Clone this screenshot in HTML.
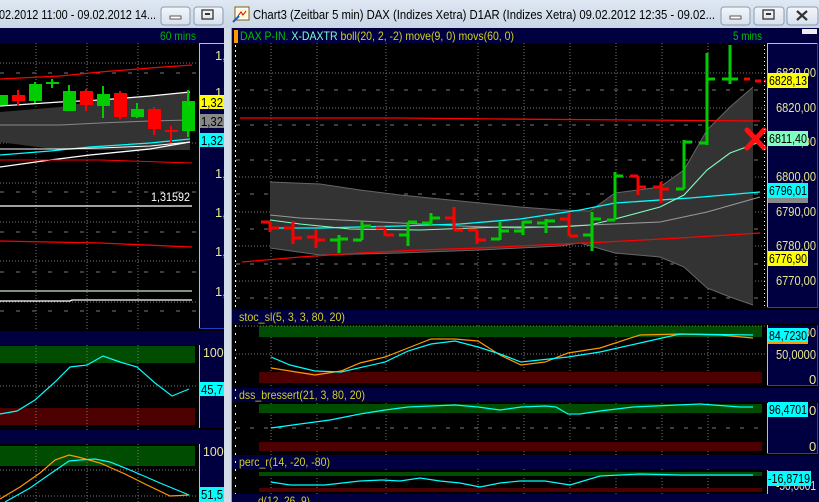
<!DOCTYPE html>
<html><head><meta charset="utf-8"><style>
html,body{margin:0;padding:0;background:#000;overflow:hidden}
svg{display:block}
text{font-family:"Liberation Sans",sans-serif}
</style></head><body>
<svg width="819" height="502" viewBox="0 0 819 502" xmlns="http://www.w3.org/2000/svg">
<defs>
<linearGradient id="tb" x1="0" y1="0" x2="0" y2="1"><stop offset="0" stop-color="#dfe8f3"/><stop offset="1" stop-color="#c9d6e6"/></linearGradient>
<linearGradient id="bt" x1="0" y1="0" x2="0" y2="1"><stop offset="0" stop-color="#f4f7fb"/><stop offset="1" stop-color="#d6e0ec"/></linearGradient>
</defs>
<rect width="819" height="502" fill="#000"/>

<!-- ================= LEFT WINDOW ================= -->
<rect x="0" y="0" width="224" height="28" fill="url(#tb)"/>
<text x="-1" y="19" font-size="13" fill="#000" textLength="157" lengthAdjust="spacingAndGlyphs">02.2012 11:00 - 09.02.2012 14...</text>
<rect x="161" y="7" width="29" height="18" rx="3" fill="url(#bt)" stroke="#8a9bb0"/>
<rect x="170" y="16" width="11" height="3" fill="#fff" stroke="#333" stroke-width="0.8"/>
<rect x="194" y="7" width="29" height="18" rx="3" fill="url(#bt)" stroke="#8a9bb0"/>
<rect x="202" y="10" width="11" height="9" fill="none" stroke="#333" stroke-width="1.3"/>
<rect x="205" y="13" width="5" height="2" fill="#333"/>
<rect x="0" y="28" width="224" height="15" fill="#000040"/>
<text x="160" y="40" font-size="12" fill="#00b000" textLength="36" lengthAdjust="spacingAndGlyphs">60 mins</text>

<g stroke="#777" stroke-dasharray="1,2" stroke-width="1">
<line x1="36" y1="43" x2="36" y2="329"/><line x1="87" y1="43" x2="87" y2="329"/><line x1="138" y1="43" x2="138" y2="329"/>
<line x1="0" y1="63" x2="196" y2="63"/><line x1="0" y1="143" x2="196" y2="143"/><line x1="0" y1="183" x2="196" y2="183"/><line x1="0" y1="222" x2="196" y2="222"/><line x1="0" y1="261" x2="196" y2="261"/><line x1="0" y1="302" x2="196" y2="302"/>
</g>
<g stroke="#777" stroke-dasharray="4,12" stroke-width="1">
<line x1="0" y1="73" x2="196" y2="73"/><line x1="0" y1="192" x2="196" y2="192"/><line x1="0" y1="232" x2="196" y2="232"/><line x1="0" y1="272" x2="196" y2="272"/><line x1="0" y1="311" x2="196" y2="311"/>
</g>
<polygon points="0,112 60,107 100,100 150,96 190,92 190,150 150,150 100,150 60,150 0,142" fill="#333"/>
<polyline points="0,106 60,102 100,100 150,96 190,92" fill="none" stroke="#fff" stroke-width="1.3"/>
<polyline points="0,125 60,125 100,123 150,121 190,120" fill="none" stroke="#888" stroke-width="1"/>
<polyline points="0,79 60,76 100,72 150,68 192,65" fill="none" stroke="#f00" stroke-width="1.3"/>
<polyline points="0,155 50,151 90,147 150,143 190,139" fill="none" stroke="#0ff" stroke-width="1.3"/>
<polyline points="0,149 60,149 100,148 150,146 190,142" fill="none" stroke="#fff" stroke-width="1"/>
<polyline points="0,167 50,160 90,155 150,149 190,142" fill="none" stroke="#fff" stroke-width="1.3"/>
<polyline points="0,160 100,160 192,163" fill="none" stroke="#f00" stroke-width="1"/>
<line x1="0" y1="206" x2="192" y2="206" stroke="#fff" stroke-width="1.3"/>
<polyline points="0,241 100,243 192,247" fill="none" stroke="#f00" stroke-width="1.3"/>
<line x1="0" y1="291" x2="192" y2="291" stroke="#cfe8cf" stroke-width="1.3"/>
<polyline points="0,301 70,301 72,300 192,300" fill="none" stroke="#fff" stroke-width="1.3"/>
<g>
<rect x="0" y="95" width="8" height="10" fill="#0c0"/>
<line x1="18" y1="90" x2="18" y2="106" stroke="#f00" stroke-width="2"/><rect x="12" y="95" width="13" height="6" fill="#f00"/>
<line x1="35" y1="82" x2="35" y2="103" stroke="#0c0" stroke-width="2"/><rect x="29" y="84" width="13" height="17" fill="#0c0"/>
<line x1="52" y1="79" x2="52" y2="88" stroke="#0c0" stroke-width="2"/><rect x="46" y="82" width="13" height="2" fill="#0c0"/>
<line x1="69" y1="85" x2="69" y2="111" stroke="#0c0" stroke-width="2"/><rect x="63" y="91" width="13" height="20" fill="#0c0"/>
<line x1="86" y1="89" x2="86" y2="111" stroke="#f00" stroke-width="2"/><rect x="80" y="91" width="13" height="14" fill="#f00"/>
<line x1="103" y1="86" x2="103" y2="118" stroke="#0c0" stroke-width="2"/><rect x="97" y="94" width="13" height="12" fill="#0c0"/>
<line x1="120" y1="91" x2="120" y2="119" stroke="#f00" stroke-width="2"/><rect x="114" y="93" width="13" height="24" fill="#f00"/>
<line x1="137" y1="103" x2="137" y2="118" stroke="#0c0" stroke-width="2"/><rect x="131" y="109" width="13" height="8" fill="#0c0"/>
<line x1="154" y1="107" x2="154" y2="135" stroke="#f00" stroke-width="2"/><rect x="148" y="109" width="13" height="20" fill="#f00"/>
<line x1="171" y1="126" x2="171" y2="143" stroke="#f00" stroke-width="2"/><rect x="165" y="130" width="13" height="2" fill="#f00"/>
<line x1="188" y1="90" x2="188" y2="137" stroke="#0c0" stroke-width="2"/><rect x="182" y="101" width="13" height="30" fill="#0c0"/>
</g>
<text x="151" y="201" font-size="12" fill="#fff" textLength="39" lengthAdjust="spacingAndGlyphs">1,31592</text>
<rect x="199" y="43" width="25" height="286" fill="#000040"/>
<line x1="199.5" y1="43" x2="199.5" y2="329" stroke="#e0c060"/>
<line x1="199" y1="43.5" x2="224" y2="43.5" stroke="#e0c060"/>
<line x1="199" y1="328.5" x2="224" y2="328.5" stroke="#2040c0"/>
<g font-size="13" fill="#e8e890">
<text x="215" y="60">1,</text><text x="215" y="97">1,</text><text x="215" y="178">1,</text><text x="215" y="217">1,</text><text x="215" y="256">1,</text><text x="215" y="296">1,</text>
</g>
<rect x="200" y="95" width="24" height="14" fill="#ffff00"/><text x="201" y="107" font-size="13" fill="#000" textLength="22" lengthAdjust="spacingAndGlyphs">1,32</text>
<rect x="200" y="114" width="24" height="14" fill="#888"/><text x="201" y="126" font-size="13" fill="#000" textLength="22" lengthAdjust="spacingAndGlyphs">1,32</text>
<rect x="200" y="133" width="24" height="14" fill="#0ff"/><text x="201" y="145" font-size="13" fill="#000" textLength="22" lengthAdjust="spacingAndGlyphs">1,32</text>

<rect x="0" y="331" width="224" height="14" fill="#000040"/>
<rect x="0" y="346" width="195" height="17" fill="#004c00"/>
<rect x="0" y="408" width="195" height="17" fill="#4c0000"/>
<g stroke="#777" stroke-dasharray="1,2"><line x1="36" y1="345" x2="36" y2="430"/><line x1="87" y1="345" x2="87" y2="430"/><line x1="138" y1="345" x2="138" y2="430"/><line x1="0" y1="386" x2="196" y2="386"/></g>
<polyline points="0,414 17,411 35,400 55,382 70,367 87,365 103,356 120,362 137,367 155,383 172,396 189,389" fill="none" stroke="#0ff" stroke-width="1.2"/>
<rect x="199" y="345" width="25" height="83" fill="#000040"/>
<line x1="199.5" y1="345" x2="199.5" y2="428" stroke="#e0c060"/>
<text x="203" y="357" font-size="13" fill="#e8e890" textLength="24" lengthAdjust="spacingAndGlyphs">100,</text>
<rect x="200" y="382" width="24" height="14" fill="#0ff"/><text x="201" y="394" font-size="13" fill="#000" textLength="22" lengthAdjust="spacingAndGlyphs">45,7</text>
<rect x="0" y="430" width="224" height="14" fill="#000040"/>
<rect x="0" y="446" width="195" height="20" fill="#004c00"/>
<g stroke="#777" stroke-dasharray="1,2"><line x1="36" y1="444" x2="36" y2="502"/><line x1="87" y1="444" x2="87" y2="502"/><line x1="138" y1="444" x2="138" y2="502"/><line x1="0" y1="470" x2="196" y2="470"/><line x1="0" y1="496" x2="196" y2="496"/></g>
<polyline points="0,499 20,487 40,473 55,460 69,455 78,457 100,463 125,474 145,484 170,496 189,495" fill="none" stroke="#ff9900" stroke-width="1.2"/>
<polyline points="5,502 30,488 50,474 69,461 80,460 95,459 110,462 130,470 160,483 189,495" fill="none" stroke="#0ff" stroke-width="1.2"/>
<rect x="199" y="444" width="25" height="58" fill="#000040"/>
<line x1="199.5" y1="444" x2="199.5" y2="502" stroke="#e0c060"/>
<text x="203" y="456" font-size="13" fill="#e8e890" textLength="24" lengthAdjust="spacingAndGlyphs">100,</text>
<rect x="200" y="487" width="24" height="15" fill="#0ff"/><text x="201" y="499" font-size="13" fill="#000" textLength="22" lengthAdjust="spacingAndGlyphs">51,5</text>

<rect x="224" y="0" width="8" height="502" fill="#d3dde9"/>
<line x1="231.5" y1="28" x2="231.5" y2="502" stroke="#8a9bb0"/>

<!-- ================= RIGHT WINDOW ================= -->
<rect x="224" y="0" width="595" height="28" fill="url(#tb)"/>
<rect x="235" y="7" width="14" height="13" fill="#fff" stroke="#806000"/>
<rect x="237" y="9" width="10" height="9" fill="#fff6d0"/>
<path d="M238 16 l3-4 2 3 3-4" stroke="#c00" fill="none"/>
<path d="M233 22 l6-6" stroke="#1060c0" stroke-width="2"/>
<text x="253" y="19" font-size="13" fill="#000" textLength="462" lengthAdjust="spacingAndGlyphs">Chart3 (Zeitbar 5 min)  DAX (Indizes Xetra) D1AR (Indizes Xetra) 09.02.2012 12:35 - 09.02...</text>
<rect x="721" y="7" width="29" height="18" rx="3" fill="url(#bt)" stroke="#8a9bb0"/>
<rect x="730" y="16" width="11" height="3" fill="#fff" stroke="#333" stroke-width="0.8"/>
<rect x="754" y="7" width="30" height="18" rx="3" fill="url(#bt)" stroke="#8a9bb0"/>
<rect x="763" y="10" width="11" height="9" fill="none" stroke="#333" stroke-width="1.3"/>
<rect x="766" y="13" width="5" height="2" fill="#333"/>
<rect x="787" y="7" width="31" height="18" rx="3" fill="url(#bt)" stroke="#8a9bb0"/>
<path d="M797 11 l10 9 M807 11 l-10 9" stroke="#333" stroke-width="2.2"/>

<rect x="232" y="28" width="587" height="15" fill="#000040"/>
<rect x="234" y="30" width="4" height="13" fill="#ff9900"/>
<text x="240" y="40" font-size="12" textLength="274" lengthAdjust="spacingAndGlyphs"><tspan fill="#00c000">DAX P-IN.</tspan><tspan fill="#80ffc0"> X-DAXTR</tspan><tspan fill="#d0d020"> boll(20, 2, -2) move(9, 0) movs(60, 0)</tspan></text>
<text x="733" y="40" font-size="12" fill="#00c000" textLength="29" lengthAdjust="spacingAndGlyphs">5 mins</text>
<rect x="802" y="29" width="15" height="5" fill="#eee"/>

<g stroke="#777" stroke-dasharray="1,2">
<line x1="271" y1="43" x2="271" y2="502"/><line x1="317" y1="43" x2="317" y2="502"/><line x1="386" y1="43" x2="386" y2="502"/><line x1="478" y1="43" x2="478" y2="502"/><line x1="524" y1="43" x2="524" y2="502"/><line x1="570" y1="43" x2="570" y2="502"/><line x1="616" y1="43" x2="616" y2="502"/><line x1="662" y1="43" x2="662" y2="502"/><line x1="708" y1="43" x2="708" y2="502"/>
<line x1="236" y1="73" x2="766" y2="73"/><line x1="236" y1="108" x2="766" y2="108"/><line x1="236" y1="142" x2="766" y2="142"/><line x1="236" y1="177" x2="766" y2="177"/><line x1="236" y1="212" x2="766" y2="212"/><line x1="236" y1="246" x2="766" y2="246"/><line x1="236" y1="281" x2="766" y2="281"/>
</g>
<g stroke="#777" stroke-dasharray="4,10">
<line x1="236" y1="90" x2="766" y2="90"/><line x1="236" y1="125" x2="766" y2="125"/><line x1="236" y1="160" x2="766" y2="160"/><line x1="236" y1="194" x2="766" y2="194"/><line x1="236" y1="229" x2="766" y2="229"/><line x1="236" y1="264" x2="766" y2="264"/><line x1="236" y1="298" x2="766" y2="298"/>
</g>
<line x1="235.5" y1="45" x2="235.5" y2="308" stroke="#fff" stroke-dasharray="2,3"/>

<polygon points="270,182 320,184 360,190 400,195 440,199 480,203 520,207 560,210 590,211 615,193 660,187 684,170 707,130 730,107 753,87 753,305 730,297 707,288 684,267 660,257 615,253 580,243 560,246 480,250 400,253 320,255 270,248" fill="#333"/>
<polyline points="270,182 320,184 360,190 400,195 440,199 480,203 520,207 560,210 590,211 615,193 660,187 684,170 707,130 730,107 753,87" fill="none" stroke="#666"/>
<polyline points="270,248 320,255 400,253 480,250 560,246 580,243 615,253 660,257 684,267 707,288 730,297 753,305" fill="none" stroke="#666"/>
<polyline points="240,118 400,118 500,119 640,120 760,121" fill="none" stroke="#f00" stroke-width="1.3"/>
<polyline points="242,262 300,257 360,253 420,250 480,248 540,245 605,242 680,238 760,233" fill="none" stroke="#f00" stroke-width="1.3"/>
<polyline points="270,215 300,218 400,223 460,226 520,228 590,225 660,222 707,212 760,197" fill="none" stroke="#999" stroke-width="1.1"/>
<polyline points="270,228 320,228 400,226 460,224 520,219 580,210 615,203 690,198 760,192" fill="none" stroke="#0ff" stroke-width="1.3"/>
<polyline points="270,220 300,224 350,229 420,230 500,227 560,227 590,225 615,219 660,207 684,195 707,170 730,153 760,142" fill="none" stroke="#80ffc0" stroke-width="1.1"/>

<g stroke-width="3" fill="none">
<g stroke="#f00">
<path d="M270 222 V232 M261 222 H270 M270 228 H279"/>
<path d="M293 221 V244 M284 228 H293 M293 238 H302"/>
<path d="M316 229 V248 M307 237 H316 M316 240 H325"/>
<path d="M385 227 V236 M376 228 H385 M385 235 H394"/>
<path d="M454 207 V230 M445 218 H454 M454 230 H463"/>
<path d="M477 230 V244 M468 230 H477 M477 240 H486"/>
<path d="M569 213 V236 M560 219 H569 M569 236 H578"/>
<path d="M638 176 V195 M630 176 H638 M638 187 H646"/>
<path d="M661 182 V203 M653 187 H661 M661 189 H669"/>
<path d="M744 79 H752 M755 81 H766" stroke-dasharray="6,3"/>
</g>
<g stroke="#0c0">
<path d="M339 235 V253 M330 240 H339 M339 239 H348"/>
<path d="M362 221 V240 M353 240 H362 M362 226 H371"/>
<path d="M408 222 V246 M399 235 H408 M408 222 H417"/>
<path d="M431 213 V225 M422 223 H431 M431 218 H440"/>
<path d="M500 222 V240 M491 239 H500 M500 231 H509"/>
<path d="M523 221 V235 M514 231 H523 M523 222 H532"/>
<path d="M546 219 V233 M537 223 H546 M546 221 H555"/>
<path d="M592 212 V251 M583 235 H592 M592 219 H601"/>
<path d="M615 172 V220 M607 220 H615 M615 176 H623"/>
<path d="M684 140 V189 M676 189 H684 M684 142 H692"/>
<path d="M707 53 V145 M699 143 H707 M707 79 H715"/>
<path d="M730 45 V84 M722 79 H730 M730 79 H738"/>
</g>
</g>
<path d="M747 130 L764 148 M764 130 L747 148" stroke="#ff1010" stroke-width="5" stroke-linecap="round"/>

<rect x="767" y="43" width="52" height="265" fill="#000040"/>
<line x1="767.5" y1="43" x2="767.5" y2="308" stroke="#e0c060"/>
<line x1="767" y1="43.5" x2="817" y2="43.5" stroke="#e0c060"/>
<line x1="767" y1="307.5" x2="817" y2="307.5" stroke="#2040c0"/>
<line x1="817.5" y1="43" x2="817.5" y2="308" stroke="#2040c0"/>
<line x1="764.5" y1="45" x2="764.5" y2="308" stroke="#fff" stroke-dasharray="1,3"/>
<g font-size="13" fill="#e8e890" lengthAdjust="spacingAndGlyphs">
<text x="776" y="77" textLength="40" lengthAdjust="spacingAndGlyphs">6830,00</text><text x="776" y="112" textLength="40" lengthAdjust="spacingAndGlyphs">6820,00</text><text x="776" y="146" textLength="40" lengthAdjust="spacingAndGlyphs">6810,00</text><text x="776" y="181" textLength="40" lengthAdjust="spacingAndGlyphs">6800,00</text><text x="776" y="216" textLength="40" lengthAdjust="spacingAndGlyphs">6790,00</text><text x="776" y="250" textLength="40" lengthAdjust="spacingAndGlyphs">6780,00</text><text x="776" y="285" textLength="40" lengthAdjust="spacingAndGlyphs">6770,00</text>
</g>
<rect x="768" y="73" width="40" height="15" fill="#ffff00"/><text x="769" y="85" font-size="13" fill="#000" textLength="38" lengthAdjust="spacingAndGlyphs">6828,13</text>
<rect x="768" y="131" width="40" height="15" fill="#80ffc0"/><text x="769" y="143" font-size="13" fill="#000" textLength="38" lengthAdjust="spacingAndGlyphs">6811,40</text>
<rect x="768" y="183" width="40" height="15" fill="#0ff"/><text x="769" y="195" font-size="13" fill="#000" textLength="38" lengthAdjust="spacingAndGlyphs">6796,01</text>
<rect x="768" y="198" width="40" height="5" fill="#888"/>
<rect x="768" y="251" width="40" height="15" fill="#ffff00"/><text x="769" y="263" font-size="13" fill="#000" textLength="38" lengthAdjust="spacingAndGlyphs">6776,90</text>

<rect x="232" y="310" width="587" height="14" fill="#000040"/>
<text x="239" y="321" font-size="12" fill="#d0d020" textLength="106" lengthAdjust="spacingAndGlyphs">stoc_sl(5, 3, 3, 80, 20)</text>
<rect x="259" y="326" width="503" height="11" fill="#004c00"/>
<rect x="259" y="372" width="503" height="11" fill="#4c0000"/>
<line x1="236" y1="354" x2="766" y2="354" stroke="#777" stroke-dasharray="1,2"/>
<line x1="236" y1="326" x2="766" y2="326" stroke="#777" stroke-dasharray="1,2"/>
<polyline points="271,368 290,371 315,375 341,371 360,363 385,357 408,348 431,339 455,339 478,341 500,355 521,365 545,362 568,353 600,348 640,335 680,334 720,335 753,338" fill="none" stroke="#ff9900" stroke-width="1.2"/>
<polyline points="271,357 290,365 315,371 341,372 385,362 408,351 431,344 455,341 478,347 500,354 521,362 568,357 600,352 640,343 680,334 753,335" fill="none" stroke="#0ff" stroke-width="1.2"/>
<rect x="767" y="325" width="52" height="61" fill="#000040"/>
<line x1="767.5" y1="325" x2="767.5" y2="386" stroke="#e0c060"/>
<line x1="817.5" y1="325" x2="817.5" y2="386" stroke="#2040c0"/>
<line x1="767" y1="385.5" x2="817" y2="385.5" stroke="#2040c0"/>
<g font-size="13" fill="#e8e890"><text x="770" y="337" textLength="46" lengthAdjust="spacingAndGlyphs">100,0000</text><text x="776" y="359" textLength="40" lengthAdjust="spacingAndGlyphs">50,0000</text><text x="809" y="384">0</text></g>
<rect x="768" y="328" width="40" height="15" fill="#0ff"/><rect x="768" y="342" width="40" height="2" fill="#ff9900"/>
<text x="769" y="340" font-size="13" fill="#000" textLength="38" lengthAdjust="spacingAndGlyphs">84,7230</text>

<rect x="232" y="388" width="587" height="14" fill="#000040"/>
<text x="239" y="399" font-size="12" fill="#d0d020" textLength="126" lengthAdjust="spacingAndGlyphs">dss_bressert(21, 3, 80, 20)</text>
<rect x="259" y="404" width="503" height="9" fill="#004c00"/>
<rect x="259" y="442" width="503" height="9" fill="#4c0000"/>
<line x1="236" y1="428" x2="766" y2="428" stroke="#777" stroke-dasharray="4,10"/>
<polyline points="271,428 300,424 330,420 360,414 385,410 408,407 431,406 455,405 478,407 500,410 521,407 545,406 556,407 568,414 580,414 600,411 633,407 700,404 740,407 753,407" fill="none" stroke="#0ff" stroke-width="1.2"/>
<rect x="767" y="403" width="52" height="51" fill="#000040"/>
<line x1="767.5" y1="403" x2="767.5" y2="454" stroke="#e0c060"/>
<line x1="817.5" y1="403" x2="817.5" y2="454" stroke="#2040c0"/>
<line x1="767" y1="453.5" x2="817" y2="453.5" stroke="#2040c0"/>
<text x="809" y="415" font-size="13" fill="#e8e890">0</text><text x="809" y="451" font-size="13" fill="#e8e890">0</text>
<rect x="768" y="402" width="40" height="15" fill="#0ff"/><text x="769" y="414" font-size="13" fill="#000" textLength="38" lengthAdjust="spacingAndGlyphs">96,4701</text>

<rect x="232" y="455" width="587" height="14" fill="#000040"/>
<text x="239" y="466" font-size="12" fill="#d0d020" textLength="91" lengthAdjust="spacingAndGlyphs">perc_r(14, -20, -80)</text>
<rect x="259" y="472" width="503" height="4" fill="#004c00"/>
<rect x="259" y="488" width="503" height="4" fill="#4c0000"/>
<polyline points="271,482 290,485 325,485 360,481 382,480 400,481 420,478 440,481 460,483 480,487 500,483 520,481 545,481 570,485 590,479 600,476 640,474 680,475 753,475" fill="none" stroke="#0ff" stroke-width="1.2"/>
<rect x="767" y="470" width="52" height="24" fill="#000040"/>
<line x1="767.5" y1="470" x2="767.5" y2="494" stroke="#e0c060"/>
<text x="776" y="490" font-size="13" fill="#e8e890" textLength="40" lengthAdjust="spacingAndGlyphs">-50,0001</text>
<rect x="767" y="471" width="44" height="15" fill="#0ff"/><text x="768" y="483" font-size="13" fill="#000" textLength="42" lengthAdjust="spacingAndGlyphs">-16,8719</text>

<rect x="232" y="494" width="587" height="8" fill="#000040"/>
<text x="258" y="505" font-size="12" fill="#d0d020" textLength="52" lengthAdjust="spacingAndGlyphs">d(12, 26, 9)</text>
<line x1="235.5" y1="325" x2="235.5" y2="494" stroke="#fff" stroke-dasharray="2,6"/>
</svg>
</body></html>
